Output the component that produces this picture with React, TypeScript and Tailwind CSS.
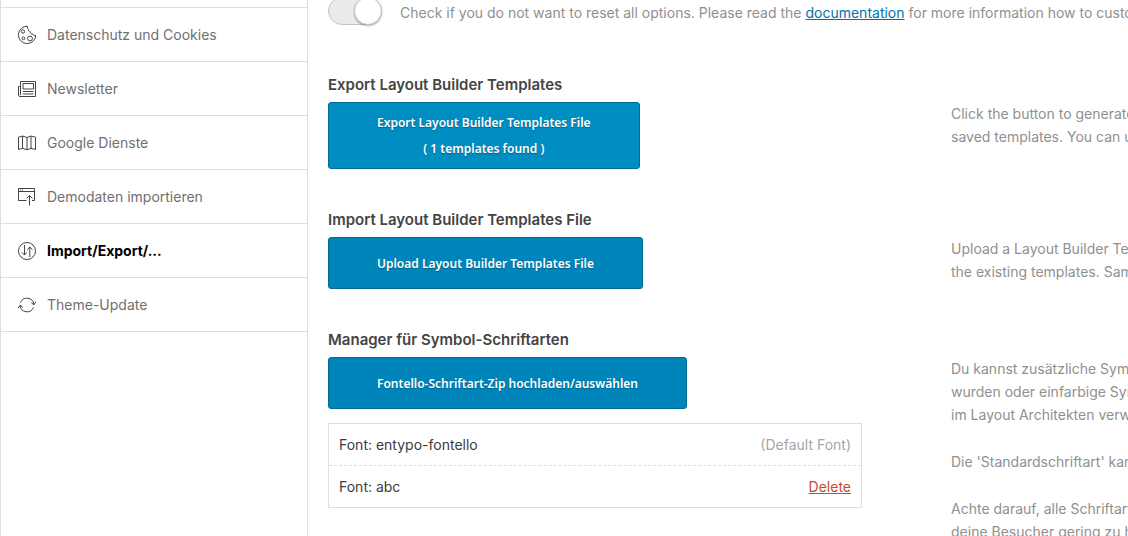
import type { ReactNode } from 'react';

// --- Interfaces & Data ---
interface NavItem {
  label: string;
  icon: ReactNode;
  active?: boolean;
}

interface FontEntry {
  name: string;
  removable: boolean;
}

const navItems: NavItem[] = [
  {
    label: 'Datenschutz und Cookies',
    icon: (
      <>
        <path d="M10.6 1.2a8.7 8.7 0 1 0 8.2 9.2c-1.4.5-2.6 0-2.9-1.4-1.6.3-2.7-.7-2.5-2.2-1.7-.2-2.3-1.1-1.8-2.4-1.2-.7-1.5-1.8-1-3.2z" />
        <circle cx="6" cy="6.5" r="1.7" />
        <circle cx="6.5" cy="13.3" r="1.4" />
        <circle cx="13" cy="13.5" r="2.4" />
      </>
    ),
  },
  {
    label: 'Newsletter',
    icon: (
      <>
        <path d="M3.5 2.5h15v15H3a1.5 1.5 0 0 1-1.500-1.500V7.500h2zM3.500 7.500V16" />
        <path d="M6 4.500h10.500v5.500H6zM6 12.500h10.500M6 15h10.500" />
      </>
    ),
  },
  {
    label: 'Google Dienste',
    icon: (
      <path d="M1.500 4.200 5.500 3l4.500 1.500L14 3l4.500 1.200v12.300L14 15.300l-4 1.500-4.500-1.500-4 1.200zM5.500 3v12.300M10 4.500v12.300M14 3v12.300" />
    ),
  },
  {
    label: 'Demodaten importieren',
    icon: (
      <>
        <path d="M9.500 13.500h-8v-12h16v12h-2.500M1.500 4.500h16M3 3h1M5 3h1" />
        <path d="M12.500 18.500V8.500M9.500 11.500l3-3 3 3" />
      </>
    ),
  },
  {
    label: 'Import/Export/...',
    active: true,
    icon: (
      <>
        <circle cx="10" cy="10" r="8.500" />
        <path d="M7.500 4v10M4.800 11.300l2.700 2.700 2.300-2.700M12.800 16V6M10.300 8.700 12.800 6l2.700 2.700" />
      </>
    ),
  },
  {
    label: 'Theme-Update',
    icon: (
      <path d="M3.500 7.500a7 7 0 0 1 13.400 1.800M14.300 7.800l2.700 2 1.800-3M16.500 12.500a7 7 0 0 1-13.400-1.800M5.700 12.200l-2.700-2-1.800 3" />
    ),
  },
];

const fonts: FontEntry[] = [
  { name: 'entypo-fontello', removable: false },
  { name: 'abc', removable: true },
];

function Sidebar() {
  return (
    <nav className="w-[308px] shrink-0 border-x border-[#dfdfdf] pt-[7px]">
      <ul className="border-t border-[#dfdfdf]">
        {navItems.map((item) => (
          <li key={item.label} className="border-b border-[#dfdfdf]">
            <a
              href="#"
              className={`flex h-[53px] items-center gap-2.5 pl-4 ${
                item.active ? 'font-bold text-black' : 'text-[#707070]'
              }`}
            >
              <svg
                viewBox="0 0 20 20"
                fill="none"
                stroke="#444444"
                strokeLinejoin="round"
                className="size-5 shrink-0"
                aria-hidden="true"
              >
                {item.icon}
              </svg>
              {item.label}
            </a>
          </li>
        ))}
      </ul>
    </nav>
  );
}

/** Option row: control on the left, help text on the right */
function Section({ title, help, children }: { title: string; help: ReactNode; children: ReactNode }) {
  return (
    <section className="flex gap-[89px]">
      <div className="min-w-0 flex-1">
        <h2 className="mb-[5px] text-[15px] leading-6 font-semibold text-[#444444]">{title}</h2>
        {children}
      </div>
      <div className="h-0 w-[177px] shrink-0 pt-[29px] leading-[23px] whitespace-nowrap text-[#909090]">{help}</div>
    </section>
  );
}

function BlueButton({ tall, children }: { tall?: boolean; children: ReactNode }) {
  return (
    <button
      type="button"
      className={`block rounded-[3px] border border-[#006a95] px-12 text-center font-['Noto_Sans',sans-serif] text-[12px] leading-[26px] font-semibold text-white [text-shadow:0_1px_1px_#00608a] ${
        tall ? 'bg-[#008ec2] pt-[7px] pb-[6px]' : 'bg-[#0085ba] pt-[13px] pb-[11px]'
      }`}
    >
      {children}
    </button>
  );
}

export default function App() {
  return (
    <div className="flex h-screen overflow-hidden bg-white font-['Inter',sans-serif] text-[14px]">
      <Sidebar />

      <main className="min-w-0 flex-1 overflow-hidden pl-5">
        {/* Reset filter switch */}
        <div className="-mt-1 mb-12 flex h-[29px] items-center gap-[18px]">
          <label className="relative flex shrink-0">
            <input
              type="checkbox"
              defaultChecked
              aria-label="Check if you do not want to reset all options"
              className="peer h-[28px] w-[54px] appearance-none rounded-full border border-[#c4c4c4] bg-[#ebebeb]"
            />
            <span className="pointer-events-none absolute top-0 left-0 size-[28px] rounded-full border border-[#c4c4c4] bg-white shadow-[0_1px_2px_rgba(0,0,0,0.3)] peer-checked:right-0 peer-checked:left-auto" />
          </label>
          <p className="pt-1 whitespace-nowrap text-[#909090]">
            Check if you do not want to reset all options. Please read the{' '}
            <a href="#" className="text-[#0073aa] underline">
              documentation
            </a>{' '}
            for more information how to custom
          </p>
        </div>

        <div className="flex flex-col gap-[39px]">
          <Section
            title="Export Layout Builder Templates"
            help={
              <p>
                Click the button to generate
                <br />
                saved templates. You can u
              </p>
            }
          >
            <BlueButton tall>
              Export Layout Builder Templates File
              <br />( 1 templates found )
            </BlueButton>
          </Section>

          <Section
            title="Import Layout Builder Templates File"
            help={
              <p>
                Upload a Layout Builder Tem
                <br />
                the existing templates. Sam
              </p>
            }
          >
            <BlueButton>Upload Layout Builder Templates File</BlueButton>
          </Section>

          <Section
            title="Manager für Symbol-Schriftarten"
            help={
              <div className="flex flex-col gap-6">
                <p>
                  Du kannst zusätzliche Symb
                  <br />
                  wurden oder einfarbige Sym
                  <br />
                  im Layout Architekten verwe
                </p>
                <p>Die 'Standardschriftart' kan</p>
                <p>
                  Achte darauf, alle Schriftart
                  <br />
                  deine Besucher gering zu h
                </p>
              </div>
            }
          >
            <BlueButton>Fontello-Schriftart-Zip hochladen/auswählen</BlueButton>
            <ul className="mt-3.5 divide-y divide-dashed divide-[#dfdfdf] border border-[#dfdfdf]">
              {fonts.map((font) => (
                <li
                  key={font.name}
                  className="box-content flex h-[41px] items-center justify-between px-2.5 text-[#3c3c3c]"
                >
                  <span>Font: {font.name}</span>
                  {font.removable ? (
                    <a href="#" className="text-[#cc4a1d] underline">
                      Delete
                    </a>
                  ) : (
                    <span className="text-[#a6a6a6]">(Default Font)</span>
                  )}
                </li>
              ))}
            </ul>
          </Section>
        </div>
      </main>
    </div>
  );
}
